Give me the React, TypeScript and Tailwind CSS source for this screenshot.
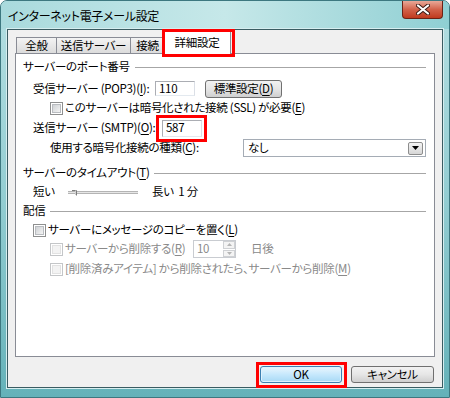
import React from "react";

const Key = ({ k }: { k: string }) => (
  <>
    (<span className="underline underline-offset-2">{k}</span>)
  </>
);

function Check({ disabled = false }: { disabled?: boolean }) {
  return (
    <span
      className={
        disabled
          ? "flex h-[13px] w-[13px] shrink-0 items-center justify-center border border-[#c4c6c8] bg-white"
          : "flex h-[13px] w-[13px] shrink-0 items-center justify-center border border-[#8e8f8f] bg-white"
      }
    >
      <span
        className={
          disabled
            ? "h-[9px] w-[9px] border border-[#e2e2e2] bg-[#f3f3f3]"
            : "h-[9px] w-[9px] border border-[#b9bcc0] bg-gradient-to-br from-[#cfd2d5] to-[#f4f4f4]"
        }
      />
    </span>
  );
}

function Heading({ children, className }: { children: React.ReactNode; className: string }) {
  return (
    <div className={`flex h-[16px] items-center pl-[7px] pr-[8px] ${className}`}>
      <span>{children}</span>
      <div className="ml-[5px] h-px flex-1 bg-[#a6a6a6]" />
    </div>
  );
}

function Tab({ label, w }: { label: string; w: string }) {
  return (
    <div
      className={`-ml-px flex h-[16px] items-center justify-center border border-b-0 border-[#898c95] bg-gradient-to-b from-[#f3f3f3] to-[#dcdcdc] ${w}`}
    >
      {label}
    </div>
  );
}

export default function App() {
  return (
    <div className="relative flex h-[398px] w-[450px] flex-col overflow-hidden whitespace-nowrap rounded-t-[7px] border border-[#3d7880] bg-gradient-to-b from-[#b4dfe2] via-[#93cdd2] to-[#64b2b9] font-['Noto_Sans_CJK_JP','Liberation_Sans',sans-serif] text-[11.5px] leading-none tracking-[-0.3px] text-black [font-feature-settings:'palt']">
      {/* title bar */}
      <div className="flex h-[28px] shrink-0 justify-between bg-gradient-to-r from-[#a9dadd] via-[#c6e8e9] to-[#8fcfd3]">
        <span className="mt-[9px] pl-[7px] text-[12px]">インターネット電子メール設定</span>
        <div className="mr-[6px] flex h-[18px] w-[41px] items-center justify-center rounded-b-[4px] border border-t-0 border-[#6b2216] bg-gradient-to-b from-[#e8a898] via-[#d2624a] to-[#c0391d]">
          <svg width="14" height="11" viewBox="0 0 14 11">
            <path d="M2 1.5 L12 9.5 M12 1.5 L2 9.5" stroke="#3b1a14" strokeWidth="4" strokeLinecap="round" />
            <path d="M2 1.5 L12 9.5 M12 1.5 L2 9.5" stroke="#ffffff" strokeWidth="2.2" strokeLinecap="round" />
          </svg>
        </div>
      </div>

      {/* client area */}
      <div className="mx-[6px] mb-[9px] flex flex-1 flex-col border border-[#3a5c62] bg-[#f0f0f0] px-[7px] pt-[2px] shadow-[0_0_0_1px_#d6eef0]">
        {/* tabs */}
        <div className="relative z-10 flex h-[21px] items-end pl-[2px]">
          <Tab label="全般" w="w-[41px]" />
          <Tab label="送信サーバー" w="w-[75px]" />
          <Tab label="接続" w="w-[35px]" />
          <div className="relative -mb-px -ml-[2px] flex h-[23px] w-[68px] items-center justify-center border border-b-0 border-[#898c95] bg-white">
            詳細設定
            <div className="pointer-events-none absolute -bottom-[3px] -left-[2px] -right-[5px] -top-[3px] border-[3px] border-[#ff0000]" />
          </div>
        </div>

        {/* panel */}
        <div className="flex h-[304px] flex-col border border-[#898c95] bg-white">
          <Heading className="mt-[5px]">サーバーのポート番号</Heading>

          <div className="mt-[4px] flex h-[19px] items-center pl-[17px]">
            <span className="w-[122px] shrink-0">
              受信サーバー (POP3)<Key k="I" />:
            </span>
            <div className="flex h-[15px] w-[40px] items-center border border-[#abadb3] border-b-[#e3e9ef] border-r-[#dbdfe6] pl-[3px]">
              110
            </div>
            <div className="ml-[10px] flex h-[18px] w-[77px] items-center justify-center rounded-[3px] border border-[#707070] bg-gradient-to-b from-[#f2f2f2] via-[#e6e6e6] to-[#cfcfcf]">
              標準設定<Key k="D" />
            </div>
          </div>

          <div className="mt-[2px] flex h-[16px] items-center gap-[2px] pl-[34px]">
            <Check />
            <span>
              このサーバーは暗号化された接続 (SSL) が必要<Key k="E" />
            </span>
          </div>

          <div className="mt-[3px] flex h-[18px] items-center pl-[17px]">
            <span className="w-[129px] shrink-0">
              送信サーバー (SMTP)<Key k="O" />:
            </span>
            <div className="relative flex h-[17px] w-[40px] items-center border border-[#abadb3] border-b-[#e3e9ef] border-r-[#dbdfe6] pl-[3px]">
              587
              <div className="pointer-events-none absolute -bottom-[6px] -left-[7px] -right-[6px] -top-[6px] border-[3px] border-[#ff0000]" />
            </div>
          </div>

          <div className="mt-[2px] flex h-[18px] items-center pl-[34px]">
            <span className="w-[193px] shrink-0">
              使用する暗号化接続の種類<Key k="C" />:
            </span>
            <div className="flex h-[18px] w-[183px] items-center justify-between border border-[#a5acb5] bg-white pl-[4px] pr-[2px]">
              なし
              <div className="flex h-[13px] w-[15px] items-center justify-center rounded-[2px] border border-[#8d8d8d] bg-gradient-to-b from-[#f4f4f4] to-[#d6d6d6]">
                <svg width="7" height="4" viewBox="0 0 7 4">
                  <path d="M0 0 H7 L3.5 4 Z" fill="#000" />
                </svg>
              </div>
            </div>
          </div>

          <Heading className="mt-[8px]">
            サーバーのタイムアウト<Key k="T" />
          </Heading>

          <div className="mt-[3px] flex h-[16px] items-center pl-[17px]">
            <span className="w-[35px] shrink-0">短い</span>
            <div className="relative flex h-[10px] w-[70px] items-center">
              <div className="h-[3px] w-full border-y border-[#b4b4b4] bg-[#e6e6e6]" />
              <svg className="absolute left-[3px] top-0" width="8" height="10" viewBox="0 0 8 10">
                <path d="M1 3.5 H5.5 V8.5" stroke="#7b7b7b" strokeWidth="1" fill="none" />
                <path d="M4.5 3.5 V8" stroke="#d0d0d0" strokeWidth="1" />
              </svg>
            </div>
            <span className="ml-[14px]">長い&nbsp;&nbsp;1 分</span>
          </div>

          <Heading className="mt-[3px]">配信</Heading>

          <div className="mt-[3px] flex h-[16px] items-center gap-[2px] pl-[17px]">
            <Check />
            <span>
              サーバーにメッセージのコピーを置く<Key k="L" />
            </span>
          </div>

          <div className="mt-[2px] flex h-[18px] items-center pl-[34px] text-[#8a8a8a]">
            <Check disabled />
            <span className="ml-[2px] w-[128px] shrink-0">
              サーバーから削除する<Key k="R" />
            </span>
            <div className="flex h-[18px] w-[43px] items-center border border-[#c9ccd1] pl-[3px] text-[#8a8a8a]">
              <span className="flex-1">10</span>
              <div className="flex h-[16px] w-[12px] flex-col gap-px">
                <div className="flex flex-1 items-center justify-center border border-[#cfd1d4] bg-[#f4f4f4]">
                  <svg width="5" height="3" viewBox="0 0 5 3"><path d="M0 3 L2.5 0 L5 3 Z" fill="#b5b5b5" /></svg>
                </div>
                <div className="flex flex-1 items-center justify-center border border-[#cfd1d4] bg-[#f4f4f4]">
                  <svg width="5" height="3" viewBox="0 0 5 3"><path d="M0 0 L5 0 L2.5 3 Z" fill="#b5b5b5" /></svg>
                </div>
              </div>
            </div>
            <span className="ml-[15px]">日後</span>
          </div>

          <div className="mt-[3px] flex h-[16px] items-center gap-[2px] pl-[34px] text-[#8a8a8a]">
            <Check disabled />
            <span>
              [削除済みアイテム] から削除されたら、サーバーから削除<Key k="M" />
            </span>
          </div>
        </div>

        {/* buttons */}
        <div className="mt-[9px] flex justify-end gap-[9px] pr-[1px]">
          <div className="relative flex h-[17px] w-[82px] items-center justify-center rounded-[3px] border border-[#3c7fb1] bg-gradient-to-b from-[#eaf6fd] via-[#c6e8fc] to-[#a7d9f5] shadow-[inset_0_0_0_1px_#dff2fd]">
            OK
            <div className="pointer-events-none absolute -bottom-[6px] -left-[5px] -right-[6px] -top-[5px] border-[3px] border-[#ff0000]" />
          </div>
          <div className="flex h-[17px] w-[83px] items-center justify-center rounded-[3px] border border-[#707070] bg-gradient-to-b from-[#f2f2f2] via-[#e6e6e6] to-[#cfcfcf]">
            キャンセル
          </div>
        </div>
      </div>
    </div>
  );
}
